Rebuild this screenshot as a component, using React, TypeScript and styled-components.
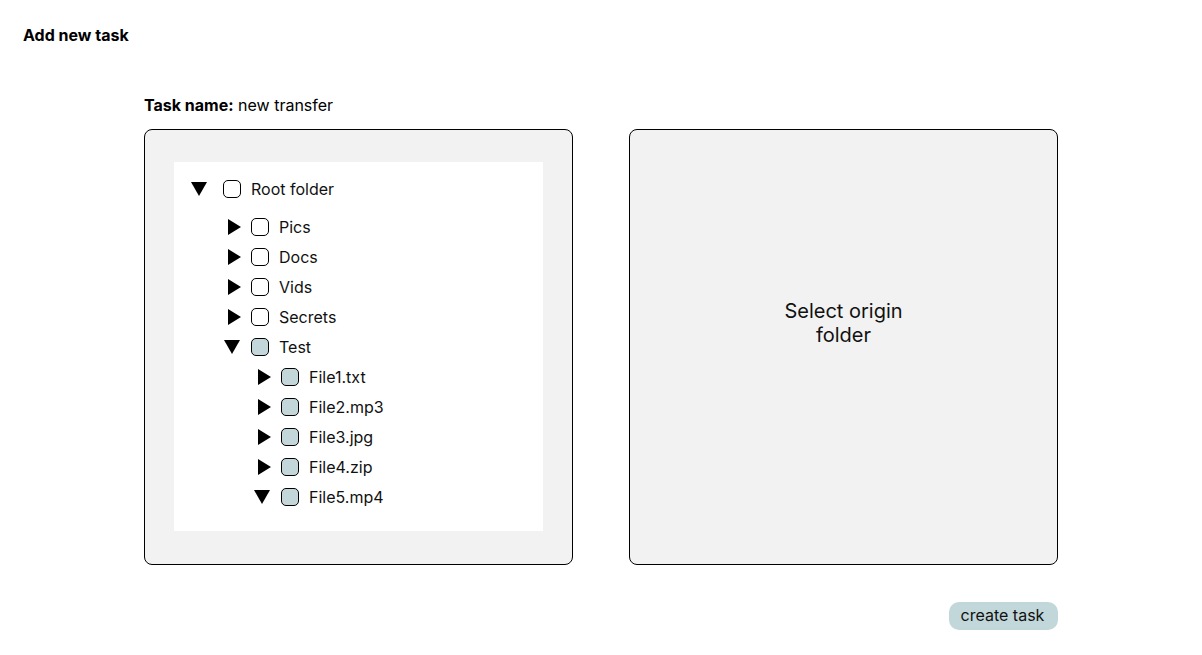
import React from "react";
import styled, { createGlobalStyle } from "styled-components";

const Global = createGlobalStyle`
  html, body { margin: 0; padding: 0; background: #ffffff; }
  body { font-family: Inter, "Noto Sans", sans-serif; color: #000; }
  * { box-sizing: border-box; }
`;

const Page = styled.div`
  width: 1202px;
  height: 655px;
  padding-top: 25px;
`;

const Title = styled.h1`
  margin: 0 0 0 23px;
  font-size: 16px;
  line-height: 20px;
  font-weight: 700;
`;

const Main = styled.div`
  width: 914px;
  margin: 50px auto 0;
`;

const NameLine = styled.div`
  font-size: 16px;
  line-height: 20px;
  margin-bottom: 14px;
  b { font-weight: 700; }
`;

const Panels = styled.div`
  display: grid;
  grid-template-columns: 429px 429px;
  column-gap: 56px;
`;

const Panel = styled.div`
  height: 436px;
  background: #f2f2f2;
  border: 1px solid #000;
  border-radius: 8px;
  display: flex;
  align-items: center;
  justify-content: center;
`;

const TreeBox = styled.div`
  align-self: flex-start;
  margin-top: 32px;
  width: 369px;
  height: 369px;
  background: #ffffff;
  padding-top: 12px;
`;

const Row = styled.div<{ $indent: number; $root?: boolean }>`
  display: flex;
  align-items: center;
  height: 30px;
  padding-left: ${(p) => p.$indent}px;
  margin-bottom: ${(p) => (p.$root ? 8 : 0)}px;
  font-size: 16px;
`;

const Toggle = styled.span<{ $w: number; $open: boolean }>`
  width: ${(p) => p.$w}px;
  flex: none;
  display: flex;
  align-items: center;
  padding-left: ${(p) => (p.$open ? 0 : 4)}px;
  svg { display: block; }
`;

const Check = styled.span<{ $filled?: boolean }>`
  width: 18px;
  height: 18px;
  flex: none;
  border: 1px solid #000;
  border-radius: 5px;
  background: ${(p) => (p.$filled ? "#c3d6d9" : "#ffffff")};
  margin-right: 10px;
`;

const Label = styled.span`
  line-height: 20px;
  color: #111;
`;

const Hint = styled.div`
  font-size: 20px;
  line-height: 24px;
  text-align: center;
  color: #111;
  margin-bottom: 48px;
`;

const Footer = styled.div`
  display: flex;
  justify-content: flex-end;
  margin-top: 37px;
`;

const Button = styled.button`
  width: 109px;
  height: 28px;
  padding: 0 2px 2px 0;
  border: none;
  border-radius: 10px;
  background: #c2d7da;
  font-family: Inter, "Noto Sans", sans-serif;
  font-size: 16px;
  line-height: 26px;
  color: #111;
  cursor: pointer;
`;

const Down = () => (
  <svg width="16" height="14" viewBox="0 0 16 14">
    <polygon points="0,0 16,0 8,14" fill="#000" />
  </svg>
);
const Right = () => (
  <svg width="13" height="16" viewBox="0 0 13 16">
    <polygon points="0,0 13,8 0,16" fill="#000" />
  </svg>
);

type Item = { label: string; level: number; open: boolean; filled: boolean };

const items: Item[] = [
  { label: "Pics", level: 1, open: false, filled: false },
  { label: "Docs", level: 1, open: false, filled: false },
  { label: "Vids", level: 1, open: false, filled: false },
  { label: "Secrets", level: 1, open: false, filled: false },
  { label: "Test", level: 1, open: true, filled: true },
  { label: "File1.txt", level: 2, open: false, filled: true },
  { label: "File2.mp3", level: 2, open: false, filled: true },
  { label: "File3.jpg", level: 2, open: false, filled: true },
  { label: "File4.zip", level: 2, open: false, filled: true },
  { label: "File5.mp4", level: 2, open: true, filled: true },
];

export default function App() {
  return (
    <>
      <Global />
      <Page>
        <Title>Add new task</Title>
        <Main>
          <NameLine>
            <b>Task name:</b> new transfer
          </NameLine>
          <Panels>
            <Panel>
              <TreeBox>
                <Row $indent={17} $root>
                  <Toggle $w={32} $open>
                    <Down />
                  </Toggle>
                  <Check />
                  <Label>Root folder</Label>
                </Row>
                {items.map((it) => (
                  <Row key={it.label} $indent={it.level === 1 ? 50 : 80}>
                    <Toggle $w={27} $open={it.open}>
                      {it.open ? <Down /> : <Right />}
                    </Toggle>
                    <Check $filled={it.filled} />
                    <Label>{it.label}</Label>
                  </Row>
                ))}
              </TreeBox>
            </Panel>
            <Panel>
              <Hint>
                Select origin
                <br />
                folder
              </Hint>
            </Panel>
          </Panels>
          <Footer>
            <Button>create task</Button>
          </Footer>
        </Main>
      </Page>
    </>
  );
}
